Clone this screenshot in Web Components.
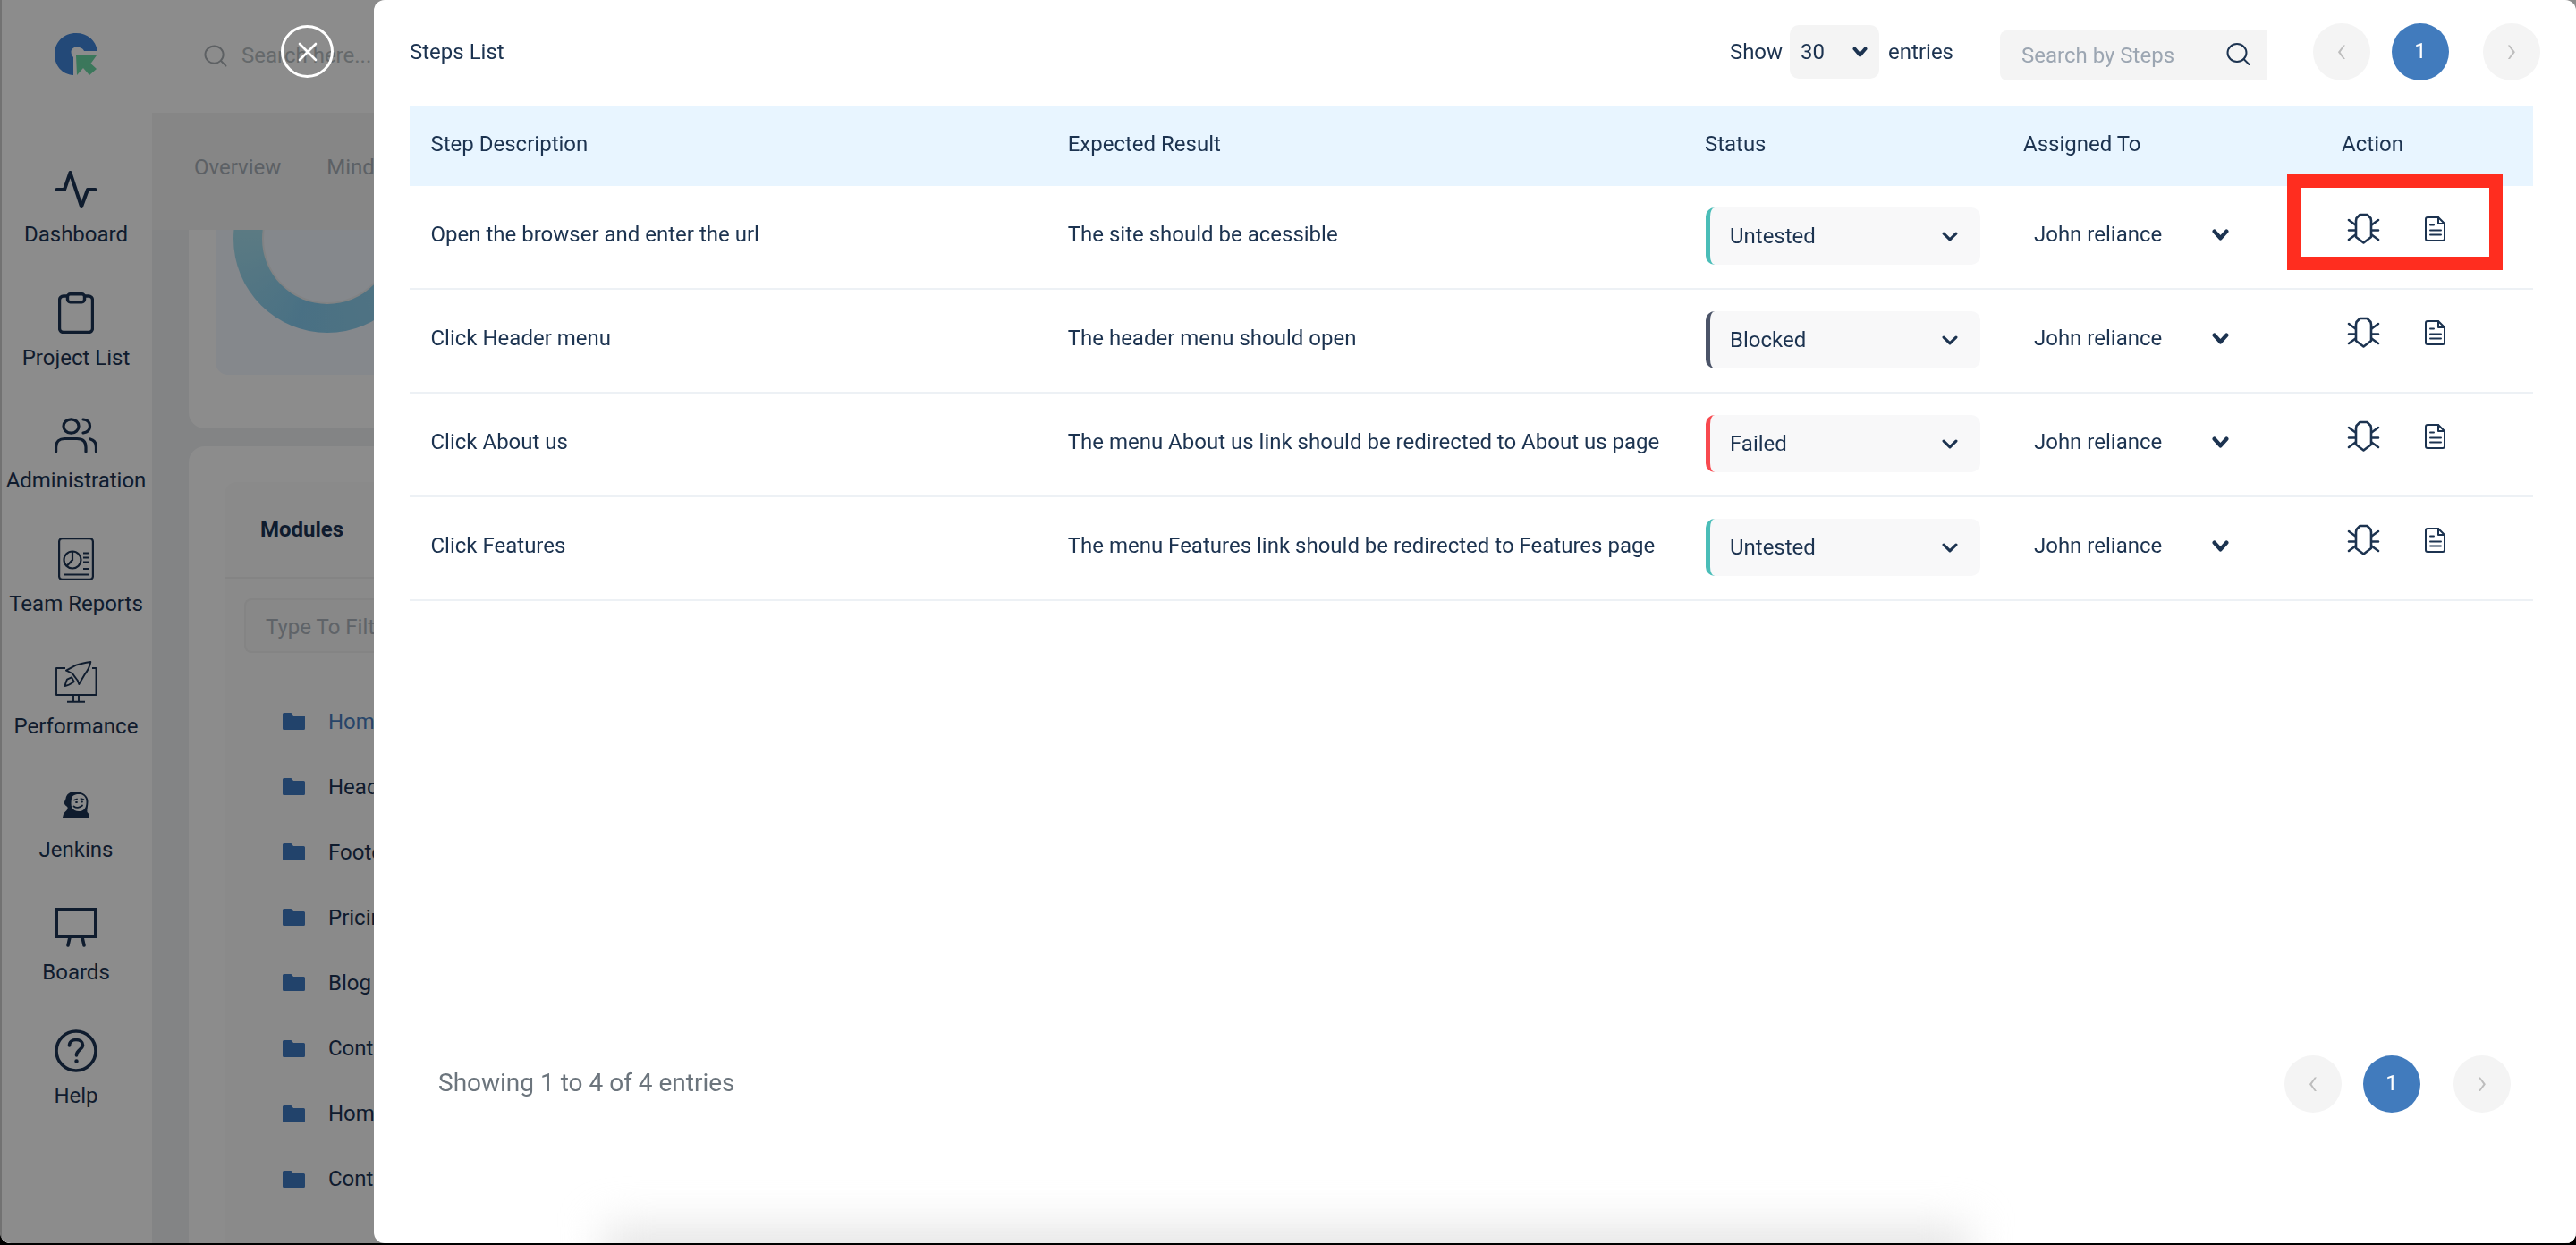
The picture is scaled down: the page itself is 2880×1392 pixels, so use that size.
<!DOCTYPE html>
<html lang="en">
<head>
<meta charset="utf-8">
<title>Steps List</title>
<style>
  html, body { margin: 0; height: 100%; background: #000; overflow: hidden; font-family: Roboto, "Liberation Sans", sans-serif; }
</style>
</head>
<body>
<qa-app></qa-app>
<script>
function def(name, html) {
  const t = document.createElement('template');
  t.innerHTML = html;
  customElements.define(name, class extends HTMLElement {
    constructor() {
      super();
      this.attachShadow({ mode: 'open' }).appendChild(t.content.cloneNode(true));
    }
  });
}

const I = {
  pulse: '<svg width="46" height="42" viewBox="0 0 46 42" fill="none" stroke="#1c3454" stroke-width="4" stroke-linecap="round" stroke-linejoin="round"><path d="M1.500 21H10L16.500 2 29 40 36 21H44.500"/></svg>',
  clip: '<svg width="40" height="46" viewBox="0 0 40 46" fill="none" stroke="#1c3454" stroke-width="3.400" stroke-linejoin="round"><path d="M10 4H6a4.500 4.500 0 0 0-4.500 4.500V40A4.500 4.500 0 0 0 6 44.500H34a4.500 4.500 0 0 0 4.500-4.500V8.500A4.500 4.500 0 0 0 34 4H30"/><rect x="10.500" y="1.700" width="19" height="9" rx="3"/></svg>',
  users: '<svg width="48" height="40" viewBox="0 0 48 40" fill="none" stroke="#1c3454" stroke-width="3.200" stroke-linecap="round"><ellipse cx="18.500" cy="9.500" rx="8.500" ry="7.700"/><path d="M1.600 38V33C1.600 26 6 23.500 11 23.500H25C31 23.500 35 26 35 33V38"/><path d="M32 2C37.500 2.500 39.500 6 39.500 9.500 39.500 13 37.500 16 32 17"/><path d="M40 24C44 25 46.500 28 46.500 33V38"/></svg>',
  report: '<svg width="40" height="48" viewBox="0 0 40 48" fill="none" stroke="#1c3454" stroke-width="2.200"><rect x="1.100" y="1.100" width="37.800" height="45.800" rx="3.500"/><circle cx="16" cy="25" r="9.500"/><path d="M16 15.500V25L9.500 32"/><path d="M28 17.500H34M28 22.500H34M28 27.500H34M28 35H34M6 41.500H34"/></svg>',
  perf: '<svg width="46" height="47" viewBox="0 0 46 47" fill="none" stroke="#1c3454" stroke-width="1.900" stroke-linejoin="round"><path d="M11 8H1V38H45.500V8H41"/><path d="M20 38V45M26 38V45M13 45.800H33"/><path d="M39.300 1C33 2 28 3 23 4.700L12 10.700 19 14C21 17 23 19.500 24.700 21.700L26.300 26 32.300 15.700C36 11 38.500 6 39.300 1Z"/><path d="M13 20.700 18 18.300 20.700 23.300C17 26 14 27.500 10.700 28 11 25 12 23 13 20.700Z"/></svg>',
  jenkins: '<svg width="30" height="30" viewBox="0 0 30 30"><path fill="#1c3454" d="M14 0C8 0 4 3 3.500 8 3 10 1.500 11 2 13.500 2.500 15.500 4.500 16 5.500 17.500 6 19 5 21 3 22.500 1 24 .5 26 0 30H30C30 26 29 24 27.500 23 27 20 28.500 16 28.500 11 28.500 5 23 0 14 0Z"/><path fill="#fff" d="M10 8C10 4.500 15 2.500 19.500 3 24 3.500 26.500 7 26.500 11.500 26.500 16 25.500 20 21.500 21.500 17 23 12.500 21.500 10.500 18 9 15.500 9.500 11 10 8Z"/><path fill="none" stroke="#1c3454" stroke-width="1.800" stroke-linecap="round" d="M12.500 16.500C15 18.500 19 18.500 22 15.500M13 9.500L16 8.500M20.500 8 23.500 9M15 12H16M21 11.500H22"/></svg>',
  board: '<svg width="48" height="44" viewBox="0 0 48 44" fill="none" stroke="#1c3454" stroke-width="4"><rect x="2" y="2" width="44" height="30"/><path stroke-linecap="round" d="M17 33 15 42M31 33 33 42" stroke-width="3.500"/></svg>',
  help: '<svg width="48" height="48" viewBox="0 0 48 48" fill="none" stroke="#1c3454" stroke-width="3.600"><circle cx="24" cy="24" r="22"/><path stroke-linecap="round" d="M16.500 18C16.500 13.500 20 11.500 24 11.500 28.500 11.500 31.500 14 31.500 17.500 31.500 22.500 24.500 22.500 24.500 29"/><circle cx="24.500" cy="35.500" r="1" stroke-width="2.500" fill="#1c3454"/></svg>',
  folder: '<svg width="25" height="19" viewBox="0 0 25 19"><path fill="#3f7ac4" d="M1.500 0H9.500L12 3H23.500A1.500 1.500 0 0 1 25 4.500V17.500A1.500 1.500 0 0 1 23.500 19H1.500A1.500 1.500 0 0 1 0 17.500V1.500A1.500 1.500 0 0 1 1.500 0Z"/></svg>',
  bug: '<svg width="35" height="33" viewBox="0 0 35 33" fill="none" stroke="#1c3350" stroke-width="2.600" stroke-linecap="round" stroke-linejoin="round" style="overflow:visible"><path d="M13.500 1H21.500L25.500 5 26 8V26L17.500 32.500 9 26V8L9.500 5Z"/><path d="M1 7 8.500 12.500M34 7 26.500 12.500M1 18.500H8.500M34 18.500H26.500M1 29 8.500 23.500M34 29 26.500 23.500"/></svg>',
  doc: '<svg width="23" height="28" viewBox="0 0 23 28" fill="none" stroke="#1c3350" stroke-width="2" stroke-linecap="round" stroke-linejoin="round"><path d="M3 1H15L22 8V25A2 2 0 0 1 20 27H3A2 2 0 0 1 1 25V3A2 2 0 0 1 3 1Z"/><path d="M15 1V8H22"/><path d="M6 9.500H10M6 15.500H18M6 20.500H18"/></svg>',
  mag: '<svg width="27" height="25" viewBox="0 0 27 25" fill="none" stroke="#1c3350" stroke-width="2" stroke-linecap="round"><ellipse cx="12" cy="11" rx="10.500" ry="10"/><path d="M19.500 18 25.500 24"/></svg>'
};
const chev = (w, h, sw) => `<svg width="${w}" height="${h}" viewBox="0 0 ${w} ${h}" fill="none" stroke="#1c3350" stroke-width="${sw}" stroke-linecap="round" stroke-linejoin="round"><path d="M${sw/2+.5} ${sw/2+.5}L${w/2} ${h-sw/2-.5}L${w-sw/2-.5} ${sw/2+.5}"/></svg>`;

def('nav-item', `<style>
  :host { display: flex; flex-direction: column; align-items: center; height: 137.500px; font: 400 24px/34px Roboto, sans-serif; color: #1c3454; white-space: nowrap; }
  .i { height: 64px; margin-bottom: 1px; display: flex; align-items: center; justify-content: center; }
  ::slotted(span) { display: flex; }
</style><div class="i"><slot name="icon"></slot></div><slot></slot>`);

def('side-nav', `<style>
  :host { display: block; width: 168px; margin-left: 2px; background: #fff; }
  .logo { height: 180px; padding-top: 37px; box-sizing: border-box; display: flex; justify-content: center; }
  .nav { margin-left: -2px; }
  .logo svg { display: block; margin-left: -2px; }
</style>
<div class="logo"><svg width="48" height="48" viewBox="0 0 48 48"><path fill="#4085da" d="M24 0C37 0 46 8 48 20H33C32 17 28 15.500 25 15.500 21 15.500 18.500 18 18.500 21 18.500 24 20 26 21 27V47C8 46 0 36 0 24 0 10 10 0 24 0Z"/><path fill="#6cd9a6" d="M24 25H47L40.500 34 47 40 39 47 32 39 25 47Z"/></svg></div>
<div class="nav"><slot></slot></div>`);

def('tree-row', `<style>
  :host { display: flex; align-items: center; gap: 26px; height: 73.100px; font: 400 24px/34px Roboto, sans-serif; color: #1c3454; white-space: nowrap; }
  :host([active]) { color: #4a7fc0; }
  svg { display: block; flex: none; }
</style>${I.folder}<slot></slot>`);

def('page-under', `<style>
  :host { display: grid; grid-template-rows: 126px 131px 1fr; flex: 1; min-width: 0; background: #eef0f3; overflow: hidden; font-family: Roboto, sans-serif; }
  .top { background: #fff; display: flex; align-items: center; padding: 0 0 2px 58px; gap: 16px; font-size: 24px; color: #b9bfc4; white-space: nowrap; }
  .tabs { background: #f4f4f5; display: flex; gap: 51px; padding: 45px 0 0 47px; font-size: 24px; line-height: 32px; color: #a8b0b8; white-space: nowrap; }
  .body { padding-left: 41px; overflow: hidden; display: flex; flex-direction: column; gap: 20px; }
  .card { background: #fff; border-radius: 0 0 0 18px; height: 222px; padding-left: 30px; flex: none; }
  .chart { height: 162px; background: #f2f7ff; border-radius: 0 0 0 14px; overflow: hidden; padding-left: 20px; }
  .ring { width: 210px; height: 210px; margin-top: -95px; border-radius: 50%; background: conic-gradient(#9fdcf2 0deg, #8fd0ee 150deg, #86cdf0 200deg, #a8e0ee 280deg, #9fdcf2 360deg); display: flex; align-items: center; justify-content: center; }
  .ring i { display: block; width: 142px; height: 142px; border-radius: 50%; background: #f2f7ff; box-shadow: 0 0 0 2px #eceef0; }
  .card2 { background: #fff; border-radius: 18px 0 0 0; flex: 1; padding: 40px 0 0 40px; }
  .mod { background: #fcfcfc; height: 100%; border-radius: 14px 0 0 0; }
  .mh { height: 108px; border-bottom: 2px solid #f1f1f1; box-sizing: border-box; padding: 36px 0 0 40px; font-weight: 700; font-size: 24px; line-height: 34px; color: #1c3454; }
  .filter { margin: 22px 0 0 22px; height: 61px; background: #f7f7f7; border: 2px solid #f0f0f0; border-radius: 8px 0 0 8px; border-right: 0; box-sizing: border-box; padding: 13px 0 0 22px; font-size: 24px; line-height: 34px; color: #adb5bd; white-space: nowrap; overflow: hidden; }
  .tree { margin: 40px 0 0 65px; }
</style>
<div class="top">${I.mag.replace('width="27"','width="26"').replace('#1c3350','#a9afb4')}<span>Search here...</span></div>
<div class="tabs"><span>Overview</span><span>Mindmap</span></div>
<div class="body">
  <div class="card"><div class="chart"><div class="ring"><i></i></div></div></div>
  <div class="card2"><div class="mod">
    <div class="mh">Modules</div>
    <div class="filter">Type To Filter</div>
    <div class="tree">
      <tree-row active>Home</tree-row><tree-row>Header</tree-row><tree-row>Footer</tree-row><tree-row>Pricing</tree-row>
      <tree-row>Blog</tree-row><tree-row>Contact</tree-row><tree-row>Home</tree-row><tree-row>Content</tree-row>
    </div>
  </div></div>
</div>`);

def('status-select', `<style>
  :host { display: flex; align-items: center; justify-content: space-between; box-sizing: border-box; width: 307px; height: 64px; background: #f8f8f9; border-left: 5px solid var(--tone); border-radius: 10px; padding: 0 25px 0 22px; font: 400 24px/34px Roboto, sans-serif; color: #1c3350; }
  svg { display: block; }
</style><slot></slot>${chev(18, 11, 3.2)}`);

def('step-row', `<style>
  :host { display: grid; grid-template-columns: 30% 30% 15% 15% 10%; height: 116px; box-sizing: border-box; border-bottom: 2px solid #edf1f5; font: 400 24px/34px Roboto, sans-serif; color: #1c3350; white-space: nowrap; }
  .t { padding: 37px 0 0 23.500px; }
  .s { padding: 24px 0 0 24.600px; }
  .a { padding: 37px 0 0 35.500px; display: flex; }
  .who { width: 199px; flex: none; }
  .a svg { display: block; margin-top: 11px; flex: none; }
  .x { position: relative; display: flex; align-items: flex-start; padding: 31px 0 0 30px; gap: 51px; }
  .x svg { display: block; flex: none; }
  .x svg + svg { margin-top: 3px; }
  .mark { position: absolute; left: -38px; top: -13px; width: 241px; height: 107px; box-sizing: border-box; border: 15px solid #ff2d1f; display: none; }
  :host([marked]) .mark { display: block; }
</style>
<div class="t"><slot name="step"></slot></div>
<div class="t"><slot name="result"></slot></div>
<div class="s"><slot name="status"></slot></div>
<div class="a"><span class="who">John reliance</span>${chev(19, 13, 4.4)}</div>
<div class="x">${I.bug}${I.doc}<div class="mark"></div></div>`);

def('round-pager', `<style>
  :host { display: flex; gap: var(--gap, 24px); font: 400 24px/64px Roboto, sans-serif; }
  span { width: 64px; height: 64px; border-radius: 50%; text-align: center; background: #f4f4f4; color: #bdbdbd; font-size: 40px; font-weight: 300; line-height: 60px; }
  .on { background: #417bbd; color: #fff; font-size: 24px; font-weight: 400; line-height: 62px; }
  .b { margin-left: var(--gap2, 14px); }
</style><span>‹</span><span class="on">1</span><span class="b">›</span>`);

def('steps-modal', `<style>
  :host { position: fixed; left: 418px; top: 0; width: 2462px; height: 1390px; background: #fff; border-radius: 12px; overflow: hidden; display: flex; flex-direction: column; padding: 0 48px 0 40px; box-sizing: border-box; font: 400 24px/34px Roboto, sans-serif; color: #1c3350; z-index: 2; white-space: nowrap; }
  .bar { height: 119px; flex: none; display: flex; align-items: flex-start; }
  .title { margin-top: 41px; flex: 1; }
  .show { margin-top: 41px; }
  .num { margin: 28px 10px 0 8px; width: 100px; height: 60px; box-sizing: border-box; background: #f4f4f4; border-radius: 10px; display: flex; align-items: center; justify-content: space-between; padding: 0 13px 0 12px; }
  .ent { margin-top: 41px; }
  .search { margin: 34px 0 0 52px; width: 298px; height: 56px; box-sizing: border-box; background: #f4f4f4; border-radius: 8px 0 0 8px; display: flex; align-items: center; justify-content: space-between; padding: 0 18px 0 24px; color: #9ca6b2; }
  .search svg { display: block; margin-top: -3px; }
  round-pager.top { margin: 26px -8px 0 52px; }
  .head { display: grid; grid-template-columns: 30% 30% 15% 15% 10%; height: 89px; flex: none; background: #e8f5ff; line-height: 85px; }
  .head span { padding-left: 23.500px; }
  .foot { margin-top: auto; height: 210px; flex: none; display: flex; justify-content: space-between; align-items: flex-start; padding: 0 25px 0 32px; }
  .foot .sum { font-size: 28px; line-height: 40px; color: #6c757d; margin-top: 11px; }
  .foot round-pager { --gap: 24px; --gap2: 13px; }
  .haze { position: absolute; left: 258px; top: 1372px; width: 1524px; height: 60px; background: #e4e4e4; filter: blur(24px); pointer-events: none; }
</style>
<div class="bar">
  <div class="title">Steps List</div>
  <div class="show">Show</div>
  <div class="num">30 ${chev(17, 12, 4)}</div>
  <div class="ent">entries</div>
  <div class="search"><span>Search by Steps</span>${I.mag}</div>
  <round-pager class="top"></round-pager>
</div>
<div class="head"><span>Step Description</span><span>Expected Result</span><span>Status</span><span>Assigned To</span><span>Action</span></div>
<step-row marked><span slot="step">Open the browser and enter the url</span><span slot="result">The site should be acessible</span><status-select slot="status" style="--tone:#4abdb8">Untested</status-select></step-row>
<step-row><span slot="step">Click Header menu</span><span slot="result">The header menu should open</span><status-select slot="status" style="--tone:#4b5468">Blocked</status-select></step-row>
<step-row><span slot="step">Click About us</span><span slot="result">The menu About us link should be redirected to About us page</span><status-select slot="status" style="--tone:#f8494f">Failed</status-select></step-row>
<step-row><span slot="step">Click Features</span><span slot="result">The menu Features link should be redirected to Features page</span><status-select slot="status" style="--tone:#4abdb8">Untested</status-select></step-row>
<div class="foot"><div class="sum">Showing 1 to 4 of 4 entries</div><round-pager></round-pager></div>
<div class="haze"></div>`);

def('close-btn', `<style>
  :host { position: fixed; left: 314px; top: 28px; width: 59px; height: 59px; box-sizing: border-box; border: 3.500px solid #fff; border-radius: 50%; z-index: 2; display: flex; align-items: center; justify-content: center; }
  svg { display: block; }
</style><svg width="22" height="22" viewBox="0 0 22 22" fill="none" stroke="#fff" stroke-width="2.600" stroke-linecap="round"><path d="M2 2 20 20M20 2 2 20"/></svg>`);

def('qa-app', `<style>
  :host { display: block; position: relative; width: 2880px; height: 1390px; overflow: hidden; border-radius: 0 0 12px 12px; background: #fff; }
  .wrap { display: flex; height: 100%; background: #d0d0d0; }
  .back { position: absolute; inset: 0; background: rgba(0,0,0,.45); backdrop-filter: blur(.6px); z-index: 1; }
</style>
<div class="wrap">
  <side-nav>
    <nav-item><span slot="icon">${I.pulse}</span>Dashboard</nav-item>
    <nav-item><span slot="icon">${I.clip}</span>Project List</nav-item>
    <nav-item><span slot="icon">${I.users}</span>Administration</nav-item>
    <nav-item><span slot="icon">${I.report}</span>Team Reports</nav-item>
    <nav-item><span slot="icon">${I.perf}</span>Performance</nav-item>
    <nav-item><span slot="icon">${I.jenkins}</span>Jenkins</nav-item>
    <nav-item><span slot="icon">${I.board}</span>Boards</nav-item>
    <nav-item><span slot="icon">${I.help}</span>Help</nav-item>
  </side-nav>
  <page-under></page-under>
</div>
<div class="back"></div>
<close-btn></close-btn>
<steps-modal></steps-modal>`);
</script>
</body>
</html>
